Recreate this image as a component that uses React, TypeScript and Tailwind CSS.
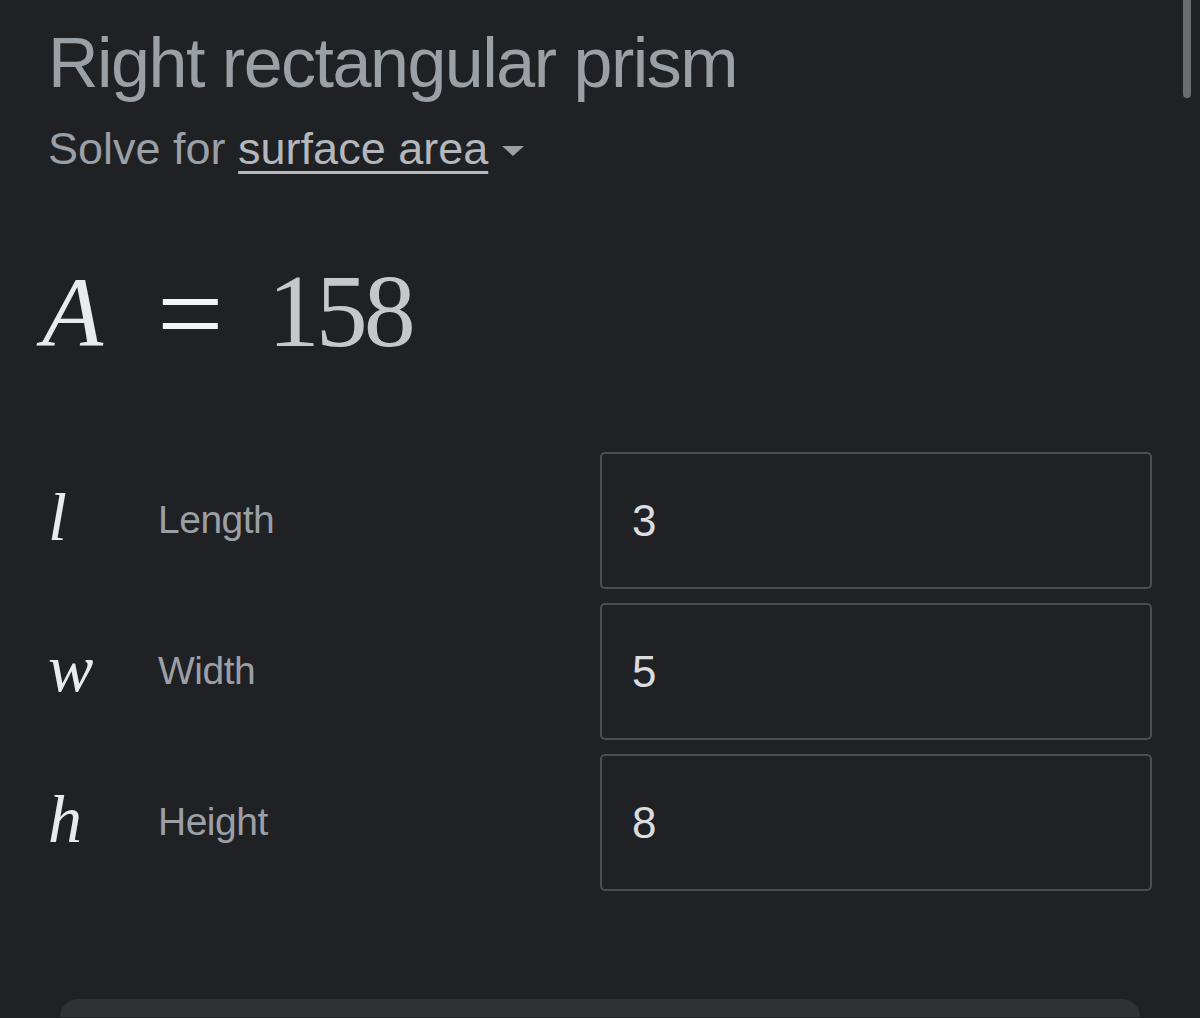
import React from "react";

const rows = [
  { v: "l", label: "Length", value: "3" },
  { v: "w", label: "Width", value: "5" },
  { v: "h", label: "Height", value: "8" },
];

export default function App() {
  return (
    <div className="relative h-[1018px] w-full overflow-hidden bg-[#202124]">
      <div className="absolute right-[9px] top-0 h-[98px] w-[8px] rounded-b-full bg-[#6a6d72]" />
      <div className="px-[48px] pt-[28px]">
        <div
          className="text-[70px] leading-none tracking-[-1.5px] text-[#9aa0a6]"
          style={{ fontFamily: '"Liberation Sans", Arial, sans-serif' }}
        >
          Right rectangular prism
        </div>
        <div
          className="mt-[28px] flex items-center text-[45px] leading-none text-[#9aa0a6]"
          style={{ fontFamily: '"Liberation Sans", Arial, sans-serif' }}
        >
          <span>Solve for&nbsp;</span>
          <span className="text-[#b4b8bd] underline decoration-[3px] underline-offset-[7px]">surface area</span>
          <svg width="22" height="12" viewBox="0 0 22 12" className="ml-[14px] mt-[4px]">
            <path d="M0 1 L22 1 L11 11 Z" fill="#9aa0a6" />
          </svg>
        </div>

        <div
          className="mt-[77px] -ml-[6px] flex items-baseline text-[100px] leading-none"
          style={{ fontFamily: '"Liberation Serif", "Times New Roman", serif' }}
        >
          <span className="italic text-[#e8eaed]">A</span>
          <span className="ml-[54px] translate-y-[8px] text-[118px] leading-none text-[#f1f3f4]">=</span>
          <span className="ml-[44px] text-[104px] tracking-[-4px] text-[#c4c7cb]">158</span>
        </div>

        <div className="mt-[86px] flex flex-col gap-[14px]">
          {rows.map((r) => (
            <div key={r.v} className="flex h-[137px] items-center">
              <div className="flex w-[110px] items-center">
                <span
                  className="-mt-[8px] text-[68px] italic leading-none text-[#e8eaed]"
                  style={{ fontFamily: '"Liberation Serif", "Times New Roman", serif' }}
                >
                  {r.v}
                </span>
              </div>
              <div
                className="flex-1 text-[39px] tracking-[-0.5px] text-[#9aa0a6]"
                style={{ fontFamily: '"Liberation Sans", Arial, sans-serif' }}
              >
                {r.label}
              </div>
              <div
                className="flex h-[137px] w-[552px] items-center rounded-[5px] border-2 border-[#4a4d52] pl-[30px] text-[44px] text-[#dadce0]"
                style={{ fontFamily: '"Liberation Sans", Arial, sans-serif' }}
              >
                {r.value}
              </div>
            </div>
          ))}
        </div>

        <div className="mx-[12px] mt-[108px] h-[18px] rounded-t-[44px] bg-[#303134]" />
      </div>
    </div>
  );
}
